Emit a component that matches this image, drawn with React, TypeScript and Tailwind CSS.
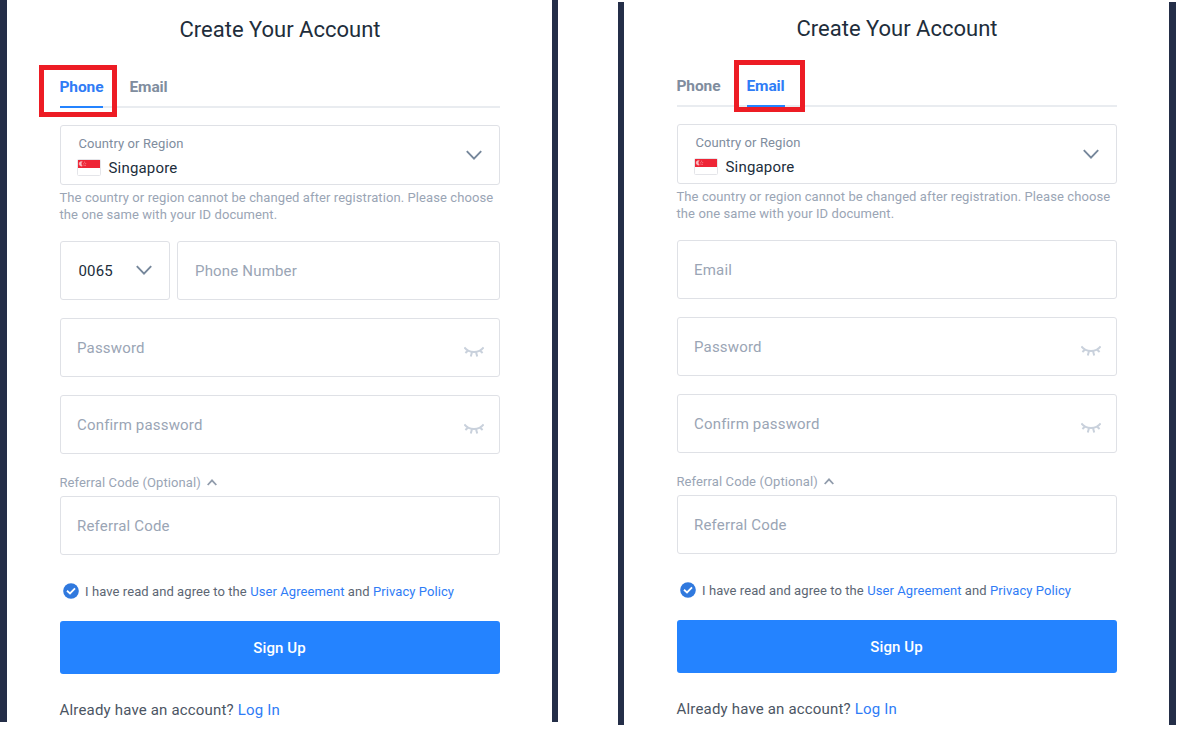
import React from "react";

type Mode = "phone" | "email";

function Chevron() {
  return (
    <svg width="16" height="10" viewBox="0 0 16 10" fill="none" stroke="#76879b" strokeWidth="1.9">
      <path d="M0.8 1.2 L8 8.6 L15.2 1.2" />
    </svg>
  );
}

function ClosedEye() {
  return (
    <svg width="20" height="12" viewBox="0 0 20 12" fill="none" stroke="#c9d1dc" strokeWidth="2">
      <path d="M0.3 1.4 C3 4.8 6 6 10 6 C14 6 17 4.8 19.7 1.4" />
      <path d="M4.4 4.2 L1.4 7 M8 6 L6.8 10.4 M12 6 L13.2 10.4 M15.6 4.2 L18.6 7" />
    </svg>
  );
}

function Flag() {
  return (
    <svg width="24" height="17" viewBox="0 0 24 17">
      <rect x="0.5" y="0.5" width="23" height="16" rx="1" fill="#fff" stroke="#e4e5e9" />
      <rect x="1" y="1" width="22" height="8" fill="#ee2536" />
      <path d="M5.4 2.6 A2.4 2.4 0 1 0 5.4 7 A2.8 2.8 0 0 1 5.4 2.6" fill="#fff" opacity="0.7" stroke="#fff" strokeWidth="0.3" />
      <path d="M7 3.2h1M8.2 4.4h1M6.2 4.8h1M6.6 6.3h1M7.9 6.3h1" stroke="#fff" strokeWidth="0.8" opacity="0.5" />
    </svg>
  );
}

function Field({ label, eye = false }: { label: string; eye?: boolean }) {
  return (
    <div className="flex h-[59px] flex-1 items-center justify-between rounded-[3px] border border-[#dfe1e6] pr-[15px] pl-4 text-[15px] tracking-[0.18px] text-[#9aa5b5]">
      <span className={label === "Phone Number" ? "pt-0.5 pl-px" : "pt-0.5"}>{label}</span>
      {eye && (
        <span className="pt-2">
          <ClosedEye />
        </span>
      )}
    </div>
  );
}

function Tab({ label, active, frame, width }: { label: string; active: boolean; frame: string; width: string }) {
  return (
    <div
      className={`relative h-8 border-b-2 ${width} ${
        active ? "border-[#2483ff] text-[#2f7cf6]" : "border-transparent text-[#808d9e]"
      }`}
    >
      <span className="-ml-[0.5px] block text-[15.5px] leading-[22px] font-bold tracking-[-0.12px]">{label}</span>
      {active && <span className={frame} />}
    </div>
  );
}

function SignUpForm({ mode }: { mode: Mode }) {
  return (
    <div className="flex w-[440px] flex-col">
      <h1 className="h-[30px] pt-px text-center text-[22px] leading-[30px] text-[#212d3b]">
        Create Your Account
      </h1>
      <div className="mt-8 flex h-8 gap-[27px] shadow-[inset_0_-2px_0_#e9ecf0]">
        <Tab
          label="Phone"
          active={mode === "phone"}
          width="w-[43px]"
          frame="absolute -top-[11px] -left-[21px] h-[52px] w-[78px] border-5 border-[#ed1c24]"
        />
        <Tab
          label="Email"
          active={mode === "email"}
          width="w-[38px]"
          frame="absolute -top-[15px] -left-[13px] h-[52px] w-[71px] border-5 border-[#ed1c24]"
        />
      </div>
      <div className="mt-[17px] flex h-[60px] items-center justify-between rounded-[3px] border border-[#dfe1e6] pr-[17px] pl-4">
        <div className="flex flex-col pt-[5px]">
          <span className="h-5 pl-[1.5px] text-[13px] leading-5 tracking-[0.09px] text-[#808d9e]">Country or Region</span>
          <div className="flex h-7 items-center">
            <Flag />
            <span className="pl-[7.5px] text-[15px] leading-7 tracking-[0.18px] text-[#212d3b]">Singapore</span>
          </div>
        </div>
        <Chevron />
      </div>
      <p className="mt-1 -ml-px h-[34px] pl-[0.5px] text-[13px] leading-[17px] tracking-[0.09px] whitespace-nowrap text-[#9aa5b5]">
        The country or region cannot be changed after registration. Please choose
        <br />
        the one same with your ID document.
      </p>
      <div className="mt-[18px] flex gap-[7px]">
        {mode === "phone" && (
          <div className="flex h-[59px] w-[110px] items-center justify-between rounded-[3px] border border-[#dfe1e6] px-[17px] text-[15px] tracking-[0.18px] text-[#212d3b]">
            <span className="pt-px pl-[0.5px]">0065</span>
            <span className="pb-px">
              <Chevron />
            </span>
          </div>
        )}
        <Field label={mode === "phone" ? "Phone Number" : "Email"} />
      </div>
      <div className="mt-[18px] flex">
        <Field label="Password" eye />
      </div>
      <div className="mt-[18px] flex">
        <Field label="Confirm password" eye />
      </div>
      <div className="mt-[18px] -ml-px flex h-6 items-center gap-[6px] pb-0.5 pl-[0.5px] text-[13px] tracking-[0.1px] text-[#9aa5b5]">
        <span className="leading-5">Referral Code (Optional)</span>
        <svg className="mb-px" width="10" height="7" viewBox="0 0 10 7" fill="none" stroke="#919cac" strokeWidth="1.8">
          <path d="M0.7 6 L5 1.4 L9.3 6" />
        </svg>
      </div>
      <div className="flex">
        <Field label="Referral Code" />
      </div>
      <div className="mt-[26px] flex h-5 items-center pl-[3px] text-[13px] tracking-[0.08px] whitespace-nowrap text-[#5c6673]">
        <svg width="16" height="16" viewBox="0 0 16 16" fill="none">
          <circle cx="8" cy="8" r="7.8" fill="#3079de" />
          <path d="M4 7.8 L7 10.4 L12 5.4" stroke="#fff" strokeWidth="1.8" />
        </svg>
        <span className="pt-0.5 pl-[6px]">
          I have read and agree to the <a className="text-[#2f7cf6]">User Agreement</a> and{" "}
          <a className="text-[#2f7cf6]">Privacy Policy</a>
        </span>
      </div>
      <button className="mt-5 h-[53px] rounded-[3px] bg-[#2483ff] pt-px pr-px text-[15px] font-medium tracking-[0.1px] text-white">
        Sign Up
      </button>
      <p className="mt-[25px] -ml-px h-[22px] pl-[0.5px] text-[15px] leading-[22px] tracking-[0.18px] text-[#4b5563]">
        Already have an account? <a className="text-[#2f7cf6]">Log In</a>
      </p>
    </div>
  );
}

export default function App() {
  return (
    <main className="flex h-[736px] w-[1194px] items-start gap-[60px] overflow-hidden bg-white font-[Roboto,sans-serif]">
      <section className="h-[722px] w-[558px] border-r-6 border-l-7 border-[#242e48] pt-[14px] pl-[53px]">
        <SignUpForm mode="phone" />
      </section>
      <section className="mt-[2px] h-[723px] w-[558px] border-r-7 border-l-6 border-[#242e48] pt-[11px] pl-[53px]">
        <SignUpForm mode="email" />
      </section>
    </main>
  );
}
